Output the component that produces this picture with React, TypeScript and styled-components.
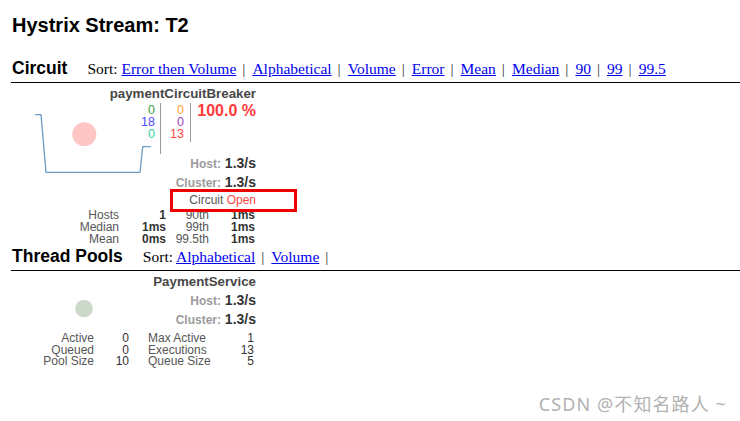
import React from 'react';
import styled, { createGlobalStyle } from 'styled-components';

const GlobalStyle = createGlobalStyle`
  html, body {
    margin: 0;
    padding: 0;
    background: #fff;
  }
  body {
    font-family: "Liberation Sans", Arial, sans-serif;
  }
`;

const Page = styled.div`
  position: relative;
  width: 740px;
  height: 421px;
  padding: 13px 0 0 11px;
  box-sizing: border-box;
  overflow: hidden;
`;

const PageTitle = styled.h1`
  margin: 0 0 20px 1px;
  font-size: 20px;
  line-height: 24px;
  font-weight: 700;
  color: #000;
`;

const SectionHeader = styled.div`
  display: flex;
  align-items: baseline;
  padding: 0 0 3px 1px;
  border-bottom: 1px solid #000;
`;

const SectionTitle = styled.h2`
  margin: 0;
  font-size: 17.5px;
  line-height: 22px;
  font-weight: 700;
  color: #000;
`;

const SortMenu = styled.div`
  margin-left: 20px;
  font-family: "Liberation Serif", "Times New Roman", serif;
  font-size: 15.5px;
  line-height: 17px;
  color: #000;
`;

const SortLink = styled.a`
  color: #0000ee;
  text-decoration: underline;
  cursor: pointer;
`;

const Pipe = styled.span`
  margin: 0 7px 0 6px;
  color: #333;
`;

const Monitor = styled.div<{ $top: number }>`
  width: 245px;
  padding-top: ${p => p.$top}px;
`;

const MonitorName = styled.div`
  text-align: right;
  font-size: 13.3px;
  line-height: 14px;
  font-weight: 700;
  color: #474747;
`;

const MonitorBody = styled.div`
  display: grid;
  grid-template-columns: 124px 121px;
  align-items: start;
`;

const Chart = styled.svg`
  display: block;
  overflow: visible;
`;

const Readouts = styled.div<{ $gap: number }>`
  padding-top: ${p => p.$gap}px;
`;

const Counters = styled.div`
  display: flex;
  align-items: flex-start;
`;

const CounterCol = styled.div<{ $width: number; $tail: number; $pad: number }>`
  width: ${p => p.$width}px;
  box-sizing: border-box;
  padding: 1px ${p => p.$pad}px ${p => p.$tail}px 0;
  border-right: 1px solid #9a9a9a;
  text-align: right;
  font-size: 12.5px;
  line-height: 12px;
`;

const Count = styled.div<{ $color: string }>`
  color: ${p => p.$color};
`;

const ErrorRate = styled.div`
  flex: 1;
  text-align: right;
  font-size: 16px;
  line-height: 16px;
  font-weight: 700;
  color: #ff3a3a;
`;

const RateRow = styled.div`
  text-align: right;
  font-size: 14px;
  line-height: 18px;
  font-weight: 700;
  color: #333;
`;

const RateLabel = styled.span`
  font-size: 12px;
  color: #9b9b9b;
`;

const StatusRow = styled.div`
  position: relative;
  text-align: right;
  font-size: 12px;
  line-height: 16px;
  color: #555;
`;

const OpenState = styled.span`
  color: #ff4646;
`;

const Highlight = styled.div`
  position: absolute;
  left: 159px;
  top: -3px;
  width: 127px;
  height: 23px;
  box-sizing: border-box;
  border: 3px solid #ee0000;
`;

const StatsTable = styled.div<{ $columns: string; $rowHeight: number; $top: number }>`
  display: grid;
  grid-template-columns: ${p => p.$columns};
  margin-top: ${p => p.$top}px;
  font-size: 12px;
  line-height: ${p => p.$rowHeight}px;
`;

const StatLabel = styled.div<{ $align?: string; $indent?: number }>`
  text-align: ${p => p.$align || 'right'};
  padding-left: ${p => p.$indent || 0}px;
  color: #555;
  white-space: nowrap;
`;

const StatValue = styled.div<{ $bold?: boolean }>`
  text-align: right;
  color: #333;
  font-weight: ${p => (p.$bold ? 700 : 400)};
`;

const Watermark = styled.div`
  position: absolute;
  right: 13px;
  bottom: 6px;
  font-family: "Noto Sans", "Noto Sans CJK SC", sans-serif;
  font-size: 18px;
  letter-spacing: 1.1px;
  line-height: 22px;
  color: #b2b2b2;
`;

interface SortBarProps {
  options: string[];
  trailing?: boolean;
}

const SortBar: React.FC<SortBarProps> = ({ options, trailing }) => (
  <SortMenu>
    Sort:{' '}
    {options.map((label, i) => (
      <React.Fragment key={label}>
        {i > 0 && <Pipe>|</Pipe>}
        <SortLink>{label}</SortLink>
      </React.Fragment>
    ))}
    {trailing && <Pipe>|</Pipe>}
  </SortMenu>
);

const circuitSorts = ['Error then Volume', 'Alphabetical', 'Volume', 'Error', 'Mean', 'Median', '90', '99', '99.5'];
const poolSorts = ['Alphabetical', 'Volume'];

const latencyRows = [
  ['Hosts', '1', '90th', '1ms'],
  ['Median', '1ms', '99th', '1ms'],
  ['Mean', '0ms', '99.5th', '1ms'],
];

const poolRows = [
  ['Active', '0', 'Max Active', '1'],
  ['Queued', '0', 'Executions', '13'],
  ['Pool Size', '10', 'Queue Size', '5'],
];

const App: React.FC = () => {
  return (
    <Page>
      <GlobalStyle />
      <PageTitle>Hystrix Stream: T2</PageTitle>

      <SectionHeader>
        <SectionTitle>Circuit</SectionTitle>
        <SortBar options={circuitSorts} />
      </SectionHeader>

      <Monitor $top={4}>
        <MonitorName>paymentCircuitBreaker</MonitorName>
        <MonitorBody>
          <Chart width={124} height={90}>
            <circle cx={73.3} cy={33.3} r={12} fill="#ffc6c6" />
            <path
              d="M24 13.7 L30 13.7 L35 71.3 L129 71.3 L131.7 45.7 L139.7 45.7"
              fill="none"
              stroke="#6f9bc6"
              strokeWidth={1.3}
            />
          </Chart>
          <Readouts $gap={2}>
            <Counters>
              <CounterCol $width={26} $tail={14} $pad={5}>
                <Count $color="#3c9f3c">0</Count>
                <Count $color="#4a4aff">18</Count>
                <Count $color="#36cfa0">0</Count>
              </CounterCol>
              <CounterCol $width={30} $tail={2} $pad={6}>
                <Count $color="#ffa533">0</Count>
                <Count $color="#9b45c2">0</Count>
                <Count $color="#ff4545">13</Count>
              </CounterCol>
              <ErrorRate>100.0 %</ErrorRate>
            </Counters>
            <RateRow>
              <RateLabel>Host:</RateLabel> 1.3/s
            </RateRow>
            <RateRow>
              <RateLabel>Cluster:</RateLabel> 1.3/s
            </RateRow>
          </Readouts>
        </MonitorBody>
        <StatusRow>
          Circuit <OpenState>Open</OpenState>
          <Highlight />
        </StatusRow>
        <StatsTable $columns="108px 47px 43px 46px" $rowHeight={12} $top={1}>
          {latencyRows.map(([label, value, pct, time]) => (
            <React.Fragment key={label}>
              <StatLabel>{label}</StatLabel>
              <StatValue $bold>{value}</StatValue>
              <StatLabel>{pct}</StatLabel>
              <StatValue $bold>{time}</StatValue>
            </React.Fragment>
          ))}
        </StatsTable>
      </Monitor>

      <SectionHeader>
        <SectionTitle>Thread Pools</SectionTitle>
        <SortBar options={poolSorts} trailing />
      </SectionHeader>

      <Monitor $top={4}>
        <MonitorName>PaymentService</MonitorName>
        <MonitorBody>
          <Chart width={124} height={38}>
            <circle cx={73} cy={19.5} r={8.8} fill="#cbd9c8" />
          </Chart>
          <Readouts $gap={2}>
            <RateRow>
              <RateLabel>Host:</RateLabel> 1.3/s
            </RateRow>
            <RateRow>
              <RateLabel>Cluster:</RateLabel> 1.3/s
            </RateRow>
          </Readouts>
        </MonitorBody>
        <StatsTable $columns="83px 35px 80px 45px" $rowHeight={11.5} $top={4}>
          {poolRows.map(([label, value, label2, value2]) => (
            <React.Fragment key={label}>
              <StatLabel>{label}</StatLabel>
              <StatValue>{value}</StatValue>
              <StatLabel $align="left" $indent={19}>{label2}</StatLabel>
              <StatValue>{value2}</StatValue>
            </React.Fragment>
          ))}
        </StatsTable>
      </Monitor>

      <Watermark>CSDN @不知名路人 ~</Watermark>
    </Page>
  );
};

export default App;
